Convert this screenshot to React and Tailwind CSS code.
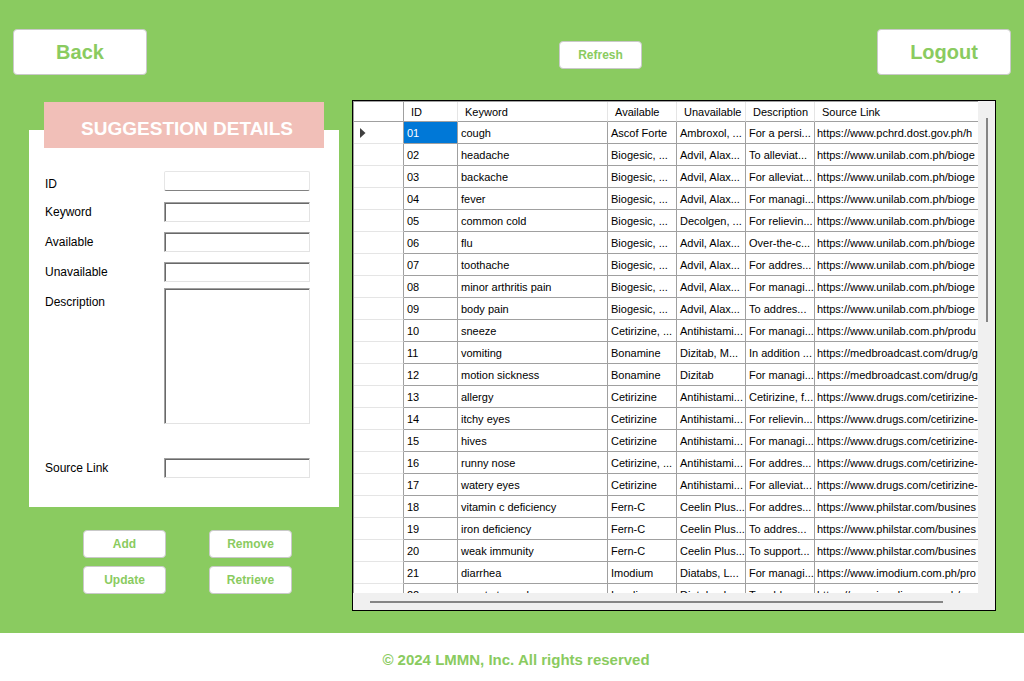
const LINKS = {
  p: "https://www.pchrd.dost.gov.ph/h",
  b: "https://www.unilab.com.ph/bioge",
  u: "https://www.unilab.com.ph/produ",
  m: "https://medbroadcast.com/drug/g",
  d: "https://www.drugs.com/cetirizine-",
  s: "https://www.philstar.com/busines",
  i: "https://www.imodium.com.ph/pro",
};

const ROWS = [
  ["01", "cough", "Ascof Forte", "Ambroxol, ...", "For a persi...", LINKS.p],
  ["02", "headache", "Biogesic, ...", "Advil, Alax...", "To alleviat...", LINKS.b],
  ["03", "backache", "Biogesic, ...", "Advil, Alax...", "For alleviat...", LINKS.b],
  ["04", "fever", "Biogesic, ...", "Advil, Alax...", "For managi...", LINKS.b],
  ["05", "common cold", "Biogesic, ...", "Decolgen, ...", "For relievin...", LINKS.b],
  ["06", "flu", "Biogesic, ...", "Advil, Alax...", "Over-the-c...", LINKS.b],
  ["07", "toothache", "Biogesic, ...", "Advil, Alax...", "For addres...", LINKS.b],
  ["08", "minor arthritis pain", "Biogesic, ...", "Advil, Alax...", "For managi...", LINKS.b],
  ["09", "body pain", "Biogesic, ...", "Advil, Alax...", "To addres...", LINKS.b],
  ["10", "sneeze", "Cetirizine, ...", "Antihistami...", "For managi...", LINKS.u],
  ["11", "vomiting", "Bonamine", "Dizitab, M...", "In addition ...", LINKS.m],
  ["12", "motion sickness", "Bonamine", "Dizitab", "For managi...", LINKS.m],
  ["13", "allergy", "Cetirizine", "Antihistami...", "Cetirizine, f...", LINKS.d],
  ["14", "itchy eyes", "Cetirizine", "Antihistami...", "For relievin...", LINKS.d],
  ["15", "hives", "Cetirizine", "Antihistami...", "For managi...", LINKS.d],
  ["16", "runny nose", "Cetirizine, ...", "Antihistami...", "For addres...", LINKS.d],
  ["17", "watery eyes", "Cetirizine", "Antihistami...", "For alleviat...", LINKS.d],
  ["18", "vitamin c deficiency", "Fern-C", "Ceelin Plus...", "For addres...", LINKS.s],
  ["19", "iron deficiency", "Fern-C", "Ceelin Plus...", "To addres...", LINKS.s],
  ["20", "weak immunity", "Fern-C", "Ceelin Plus...", "To support...", LINKS.s],
  ["21", "diarrhea", "Imodium", "Diatabs, L...", "For managi...", LINKS.i],
  ["22", "upset stomach", "Imodium", "Diatabs, L...", "To addres...", LINKS.i],
];

const COLUMNS = ["ID", "Keyword", "Available", "Unavailable", "Description", "Source Link"];

function Button({ large, children }) {
  const size = large ? "h-[46px] w-[134px] text-[20px]" : "h-[28px] w-[83px] text-[12px]";
  return (
    <button
      type="button"
      className={`shrink-0 rounded-[4px] border border-[#c9c9c9] bg-white font-bold text-[#8acb60] ${size}`}
    >
      {children}
    </button>
  );
}

const SUNKEN =
  "min-w-0 flex-1 resize-none border border-t-[#a0a0a0] border-r-[#e3e3e3] border-b-[#e3e3e3] border-l-[#a0a0a0] bg-white px-1 shadow-[inset_1px_1px_0_#696969] outline-none";

function Field({ id, label }) {
  return (
    <div className="flex h-[20px] items-center">
      <label htmlFor={id} className="w-[119px] shrink-0">
        {label}
      </label>
      <input id={id} type="text" className={`h-full ${SUNKEN}`} />
    </div>
  );
}

function SuggestionForm() {
  return (
    <section className="w-[310px] shrink-0 pt-[2px]">
      <div className="bg-[linear-gradient(#8acb60_28px,white_28px)] px-[15px] pb-[29px]">
        <h1 className="flex h-[46px] items-end justify-center bg-[#f1bfb8] pb-[7px] pl-[6px] text-[19px] leading-[24px] font-bold text-white">
          SUGGESTION DETAILS
        </h1>
        <form className="pt-[23px] pr-[14px] pl-[1px] text-[12px] leading-[16px]">
          <div className="flex flex-col gap-[10px]">
            <div className="flex h-[21px] items-end">
              <label htmlFor="id" className="w-[119px] shrink-0">
                ID
              </label>
              <input
                id="id"
                type="text"
                className="h-[20px] min-w-0 flex-1 self-start rounded-[2px] border border-[#e6e6e6] border-b-[#828282] bg-white px-1 outline-none"
              />
            </div>
            <Field id="keyword" label="Keyword" />
            <Field id="available" label="Available" />
            <Field id="unavailable" label="Unavailable" />
          </div>
          <div className="mt-[6px] mb-[34px] flex h-[136px] items-start">
            <label htmlFor="description" className="w-[119px] shrink-0 pt-[6px]">
              Description
            </label>
            <textarea id="description" className={`h-full ${SUNKEN}`} />
          </div>
          <Field id="source" label="Source Link" />
        </form>
      </div>
      <div className="mt-[23px] ml-[54px] grid w-fit grid-cols-2 gap-x-[43px] gap-y-2">
        <Button>Add</Button>
        <Button>Remove</Button>
        <Button>Update</Button>
        <Button>Retrieve</Button>
      </div>
    </section>
  );
}

function SuggestionTable() {
  return (
    <section className="flex h-[511px] min-w-0 flex-1 flex-col border border-black bg-[#f0f0f0]">
      <div className="flex min-h-0 flex-1">
        <div className="min-w-0 flex-1 overflow-hidden border-t border-l border-[#a0a0a0] bg-white">
          <table className="w-full table-fixed border-separate border-spacing-0 text-[11px] leading-[19px] whitespace-nowrap text-black">
            <colgroup>
              <col className="w-[50px]" />
              <col className="w-[54px]" />
              <col className="w-[150px]" />
              <col className="w-[69px]" />
              <col className="w-[69px]" />
              <col className="w-[69px]" />
              <col />
            </colgroup>
            <thead>
              <tr className="h-[20px] leading-[17px]">
                <th className="border-r border-b border-[#a0a0a0] p-0" aria-label="Row" />
                {COLUMNS.map((name) => (
                  <th
                    key={name}
                    className="overflow-hidden border-r border-b border-r-[#e5e5e5] border-b-[#a0a0a0] pt-[2px] pr-0 pb-0 pl-[7px] text-left font-normal last:border-r-0"
                  >
                    {name}
                  </th>
                ))}
              </tr>
            </thead>
            <tbody>
              {ROWS.map((row, r) => (
                <tr key={row[0]} className="h-[22px]">
                  <td className="border-r border-b border-r-[#a0a0a0] border-b-[#e5e5e5] py-0 pr-0 pl-[6px]">
                    {r === 0 && (
                      <svg width="6" height="10" viewBox="0 0 6 10" className="block" aria-hidden="true">
                        <path d="M0 0 L5.5 5 L0 10 Z" fill="#404040" />
                      </svg>
                    )}
                  </td>
                  {row.map((cell, c) => (
                    <td
                      key={c}
                      className={`overflow-hidden border-r border-b border-[#a0a0a0] pt-[2px] pr-0 pb-0 pl-[3px] last:border-r-0 last:pl-[2px] ${
                        r === 0 && c === 0 ? "bg-[#0078d7] text-white" : ""
                      }`}
                    >
                      {cell}
                    </td>
                  ))}
                </tr>
              ))}
            </tbody>
          </table>
        </div>
        <div className="flex w-[17px] shrink-0 justify-center pt-[17px]">
          <div className="h-[204px] w-[2px] bg-[#858585]" />
        </div>
      </div>
      <div className="flex h-[17px] shrink-0 items-center pr-[52px] pl-[17px]">
        <div className="h-[2px] flex-1 bg-[#858585]" />
      </div>
    </section>
  );
}

export default function App() {
  return (
    <div className="flex min-h-screen flex-col bg-white font-['Liberation_Sans',Arial,sans-serif] text-black">
      <main className="bg-[#8acb60] pb-[22px]">
        <header className="flex items-center px-[13px] pt-[29px]">
          <Button large>Back</Button>
          <div className="flex flex-1 justify-center pt-[6px] pl-[177px]">
            <Button>Refresh</Button>
          </div>
          <Button large>Logout</Button>
        </header>
        <div className="flex gap-[13px] pt-[25px] pr-[28px] pl-[29px]">
          <SuggestionForm />
          <SuggestionTable />
        </div>
      </main>
      <footer className="flex flex-1 items-center justify-center pt-[6px] pl-[8px] text-[15px] font-bold text-[#8acb60]">
        © 2024 LMMN, Inc. All rights reserved
      </footer>
    </div>
  );
}
